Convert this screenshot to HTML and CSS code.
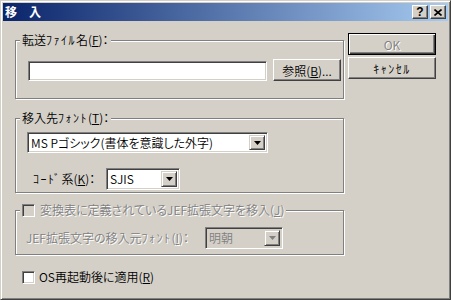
FILE: index.html
```html
<!DOCTYPE html>
<html lang="ja">
<head>
  <meta charset="UTF-8">
  <title>移入</title>
  <link rel="stylesheet" href="styles.css">
</head>
<body>
  <div class="window">
    <div class="titlebar">
      <span class="title">移　入</span>
      <div class="caption-buttons">
        <span class="cap-btn">?</span>
        <span class="cap-btn">
          <svg width="8" height="7" viewBox="0 0 8 7"><path d="M0.5 0.5 L7.5 6.5 M7.5 0.5 L0.5 6.5" stroke="#000" stroke-width="1.6" fill="none"/></svg>
        </span>
      </div>
    </div>

    <div class="content">
      <div class="main">
        <!-- 転送ファイル -->
        <fieldset class="group group-file">
          <legend>転送<span class="hw">ﾌｧｲﾙ</span>名(<u>F</u>)：</legend>
          <div class="group-body file-body">
            <div class="field file-field"></div>
            <button class="btn browse">参照(<u>B</u>)...</button>
          </div>
        </fieldset>

        <!-- 移入先フォント -->
        <fieldset class="group group-font">
          <legend>移入先<span class="hw">ﾌｫﾝﾄ</span>(<u>T</u>)：</legend>
          <div class="group-body font-body">
            <div class="combo font-combo">
              <span class="combo-value">MS Pゴシック(書体を意識した外字)</span>
              <span class="combo-btn"><svg width="7" height="4" viewBox="0 0 7 4"><polygon points="0,0 7,0 3.5,4" fill="#000"/></svg></span>
            </div>
            <div class="code-row">
              <span class="code-label"><span class="hw">ｺｰﾄﾞ</span>系(<u>K</u>)：</span>
              <div class="combo code-combo">
                <span class="combo-value">SJIS</span>
                <span class="combo-btn"><svg width="7" height="4" viewBox="0 0 7 4"><polygon points="0,0 7,0 3.5,4" fill="#000"/></svg></span>
              </div>
            </div>
          </div>
        </fieldset>

        <!-- JEF拡張文字 -->
        <fieldset class="group group-jef">
          <legend class="check-legend">
            <span class="checkbox disabled"></span>
            <span class="disabled-text">変換表に定義されているJEF拡張文字を移入(<u>J</u>)</span>
          </legend>
          <div class="group-body jef-body">
            <span class="disabled-text jef-label">JEF拡張文字の移入元<span class="hw">ﾌｫﾝﾄ</span>(<u>I</u>)：</span>
            <div class="combo jef-combo disabled">
              <span class="combo-value">明朝</span>
              <span class="combo-btn"><svg width="7" height="4" viewBox="0 0 7 4"><polygon points="0,0 7,0 3.5,4" fill="#808080"/></svg></span>
            </div>
          </div>
        </fieldset>

        <div class="check-row">
          <span class="checkbox"></span>
          <span>OS再起動後に適用(<u>R</u>)</span>
        </div>
      </div>

      <div class="side">
        <button class="btn default disabled-text">OK</button>
        <button class="btn"><span class="hw">ｷｬﾝｾﾙ</span></button>
      </div>
    </div>
  </div>
</body>
</html>
```

FILE: styles.css
```css
* {
  box-sizing: border-box;
}
body {
  margin: 0;
  background: #d4d0c8;
  font-family: "Noto Sans CJK JP", sans-serif;
  font-size: 12px;
  font-weight: 350;
  line-height: 14px;
  color: #000;
  font-feature-settings: "palt";
}
u {
  text-decoration: underline;
  text-underline-offset: 1px;
}
.hw {
  font-feature-settings: normal;
  letter-spacing: 1.5px;
}

/* Окно */
.window {
  width: 451px;
  height: 300px;
  background: #d4d0c8;
  border: 1px solid;
  border-color: #d4d0c8 #404040 #404040 #d4d0c8;
  box-shadow: inset 1px 1px 0 #fff, inset -1px -1px 0 #808080;
  padding: 2px;
}
.titlebar {
  height: 18px;
  display: flex;
  align-items: center;
  justify-content: space-between;
  padding: 0 2px;
  background: linear-gradient(to right, #0a246a, #a6caf0);
}
.title {
  color: #fff;
  font-weight: bold;
}
.caption-buttons {
  display: flex;
  gap: 2px;
}
.cap-btn {
  width: 16px;
  height: 14px;
  display: flex;
  align-items: center;
  justify-content: center;
  background: #d4d0c8;
  border: 1px solid;
  border-color: #fff #404040 #404040 #fff;
  box-shadow: inset -1px -1px 0 #808080;
  font-family: "Liberation Sans", sans-serif;
  font-weight: bold;
  font-size: 12px;
}

/* Содержимое */
.content {
  display: flex;
  padding: 12px 0 0 12px;
}
.main {
  width: 329px;
}
.side {
  display: flex;
  flex-direction: column;
  gap: 2px;
  margin-left: 4px;
}

.group {
  margin: 0;
  padding: 0;
  min-width: 0;
  border: 1px solid #808080;
  box-shadow: inset 1px 1px 0 #fff, 1px 1px 0 #fff;
}
.group legend {
  margin-left: 4px;
  padding: 0 2px;
  background: #d4d0c8;
  line-height: 14px;
}
.group-file {
  height: 66px;
}
.group-font {
  height: 82px;
  margin-top: 12px;
}
.group-jef {
  height: 52px;
  margin-top: 10px;
}

.file-body {
  display: flex;
  align-items: flex-end;
  gap: 6px;
  padding: 12px 0 0 12px;
}
.font-body {
  padding: 7px 0 0 11px;
}
.jef-body {
  display: flex;
  align-items: center;
  padding: 10px 0 0 10px;
}

/* Поля */
.field {
  height: 20px;
  background: #fff;
  border: 1px solid;
  border-color: #808080 #fff #fff #808080;
  box-shadow: inset 1px 1px 0 #404040, inset -1px -1px 0 #d4d0c8;
}
.file-field {
  width: 239px;
}

.combo {
  display: flex;
  align-items: stretch;
  background: #fff;
  border: 1px solid;
  border-color: #808080 #fff #fff #808080;
  box-shadow: inset 1px 1px 0 #404040, inset -1px -1px 0 #d4d0c8;
  padding: 2px;
}
.combo.disabled {
  background: #d4d0c8;
}
.combo-value {
  flex: 1;
  padding-left: 1px;
  line-height: 15px;
  white-space: nowrap;
}
.combo.disabled .combo-value {
  color: #808080;
}
.combo-btn {
  width: 16px;
  display: flex;
  align-items: center;
  justify-content: center;
  background: #d4d0c8;
  border: 1px solid;
  border-color: #d4d0c8 #404040 #404040 #d4d0c8;
  box-shadow: inset 1px 1px 0 #fff, inset -1px -1px 0 #808080;
}
.font-combo {
  width: 241px;
  height: 21px;
}
.code-row {
  display: flex;
  align-items: center;
  margin-top: 15px;
  padding-left: 6px;
}
.code-label {
  width: 73px;
}
.code-combo {
  width: 74px;
  height: 22px;
}
.jef-label {
  width: 179px;
}
.jef-combo {
  width: 78px;
  height: 22px;
}

/* Кнопки */
.btn {
  font-family: inherit;
  font-size: 12px;
  font-weight: inherit;
  font-feature-settings: "palt";
  color: #000;
  background: #d4d0c8;
  border: 1px solid;
  border-color: #fff #404040 #404040 #fff;
  box-shadow: inset -1px -1px 0 #808080;
  padding: 0;
  margin: 0;
}
.browse {
  width: 68px;
  height: 22px;
}
.side .btn {
  width: 88px;
  height: 22px;
}
.btn.default {
  border-color: #000;
  box-shadow: inset 1px 1px 0 #fff, inset -1px -1px 0 #404040, inset -2px -2px 0 #808080;
}

.disabled-text {
  color: #808080;
  text-shadow: 1px 1px 0 #fff;
}

/* Флажки */
.checkbox {
  display: inline-block;
  width: 13px;
  height: 13px;
  background: #fff;
  border: 1px solid;
  border-color: #808080 #fff #fff #808080;
  box-shadow: inset 1px 1px 0 #404040, inset -1px -1px 0 #d4d0c8;
  flex: none;
}
.checkbox.disabled {
  background: #d4d0c8;
}
.check-legend {
  display: flex;
  align-items: center;
  gap: 5px;
}
.check-row {
  display: flex;
  align-items: center;
  gap: 4px;
  margin-top: 15px;
  padding-left: 7px;
}
```
